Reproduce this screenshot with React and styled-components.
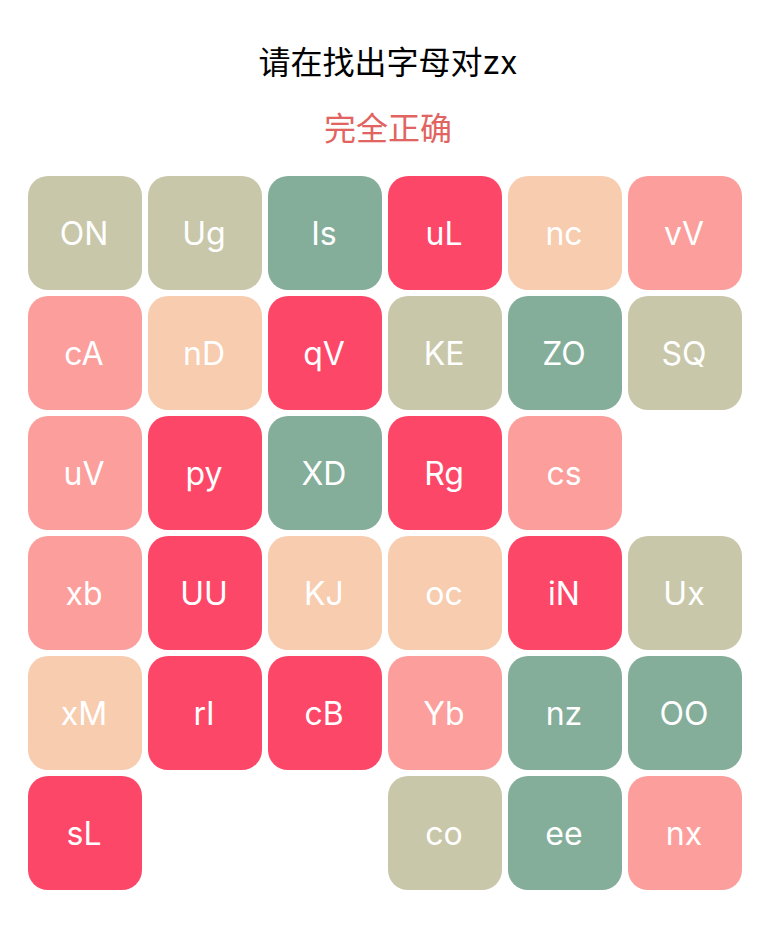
import React from "react";
import styled, { createGlobalStyle } from "styled-components";

const GlobalStyle = createGlobalStyle`
  body {
    margin: 0;
    background: #fff;
    font-family: Inter, "Noto Sans CJK SC", sans-serif;
  }
`;

const COLORS = {
  sand: "#c8c7aa",
  green: "#84ae9a",
  red: "#fd4768",
  peach: "#f7ccaf",
  pink: "#fb9e9c",
};

const TILES = [
  ["ON", "sand"], ["Ug", "sand"], ["Is", "green"], ["uL", "red"], ["nc", "peach"], ["vV", "pink"],
  ["cA", "pink"], ["nD", "peach"], ["qV", "red"], ["KE", "sand"], ["ZO", "green"], ["SQ", "sand"],
  ["uV", "pink"], ["py", "red"], ["XD", "green"], ["Rg", "red"], ["cs", "pink"], null,
  ["xb", "pink"], ["UU", "red"], ["KJ", "peach"], ["oc", "peach"], ["iN", "red"], ["Ux", "sand"],
  ["xM", "peach"], ["rI", "red"], ["cB", "red"], ["Yb", "pink"], ["nz", "green"], ["OO", "green"],
  ["sL", "red"], null, null, ["co", "sand"], ["ee", "green"], ["nx", "pink"],
];

const Page = styled.main`
  padding: 40px 0 56px 8px;
`;

const Heading = styled.h1`
  margin: 0;
  color: #000;
  font-size: 32px;
  font-weight: 400;
  line-height: 46px;
  text-align: center;
`;

const Result = styled.p`
  margin: 20px 0 24px;
  color: #e16460;
  font-size: 32px;
  line-height: 46px;
  text-align: center;
`;

const Board = styled.div`
  display: grid;
  grid-template-columns: repeat(6, 1fr);
  gap: 6px;
  margin: 0 26px 0 20px;
`;

const Tile = styled.button`
  aspect-ratio: 1;
  padding: 2px 2px 0 0;
  border: 0;
  border-radius: 20px;
  background: ${({ $color }) => $color};
  color: #fff;
  font-family: inherit;
  font-size: 32px;
  line-height: 46px;
  cursor: pointer;
`;

const EmptyCell = styled.span`
  aspect-ratio: 1;
`;

export default function App() {
  return (
    <>
      <GlobalStyle />
      <Page>
        <Heading>请在找出字母对zx</Heading>
        <Result role="status">完全正确</Result>
        <Board>
          {TILES.map((tile, index) =>
            tile ? (
              <Tile key={index} type="button" $color={COLORS[tile[1]]}>
                {tile[0]}
              </Tile>
            ) : (
              <EmptyCell key={index} />
            )
          )}
        </Board>
      </Page>
    </>
  );
}
